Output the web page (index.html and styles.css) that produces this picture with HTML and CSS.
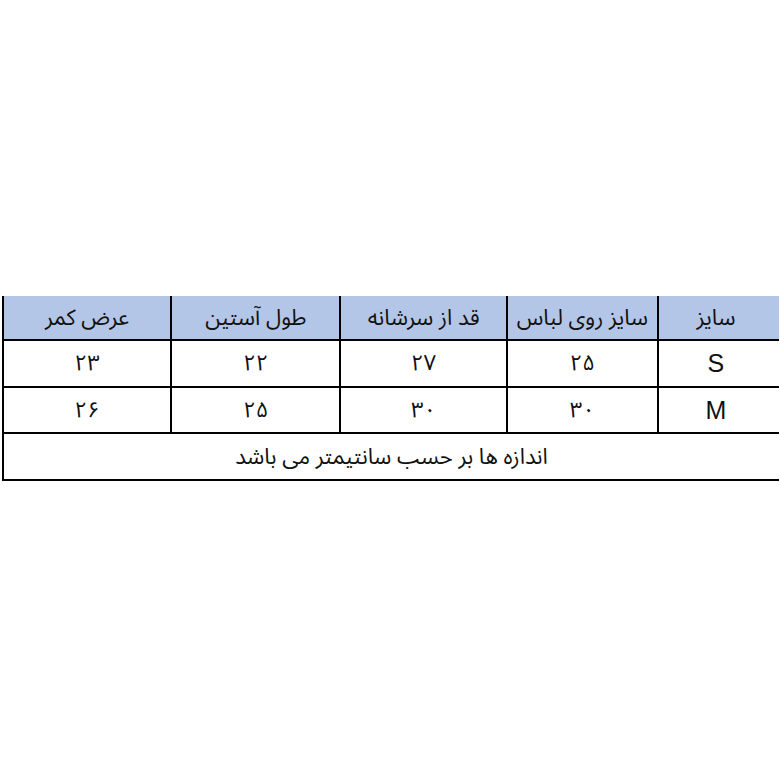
FILE: index.html
```html
<!DOCTYPE html>
<html lang="fa">
<head>
<meta charset="utf-8">
<title>جدول سایز</title>
<link rel="stylesheet" href="styles.css">
</head>
<body>
<div class="page">
  <table class="sizes" dir="rtl">
    <colgroup>
      <col class="c1"><col class="c2"><col class="c3"><col class="c4"><col class="c5">
    </colgroup>
    <thead>
      <tr class="head">
        <th class="first">سایز</th>
        <th>سایز روی لباس</th>
        <th>قد از سرشانه</th>
        <th>طول آستین</th>
        <th>عرض کمر</th>
      </tr>
    </thead>
    <tbody>
      <tr class="row">
        <td class="first latin">S</td>
        <td>۲۵</td>
        <td>۲۷</td>
        <td>۲۲</td>
        <td>۲۳</td>
      </tr>
      <tr class="row">
        <td class="first latin">M</td>
        <td>۳۰</td>
        <td>۳۰</td>
        <td>۲۵</td>
        <td>۲۶</td>
      </tr>
      <tr class="foot">
        <td colspan="5">اندازه ها بر حسب سانتیمتر می باشد</td>
      </tr>
    </tbody>
  </table>
</div>
</body>
</html>
```

FILE: styles.css
```css
html, body {
  margin: 0;
  padding: 0;
  background: #ffffff;
}

.page {
  padding-top: 296px;
  padding-left: 2px;
}

.sizes {
  border-collapse: collapse;
  table-layout: fixed;
  width: 777px;
  font-family: "Noto Sans Arabic", "DejaVu Sans", sans-serif;
  color: #111;
}

.c1 { width: 121px; }
.c2 { width: 151px; }
.c3 { width: 166px; }
.c4 { width: 169px; }
.c5 { width: 168px; }

.sizes th,
.sizes td {
  padding: 0;
  text-align: center;
  vertical-align: middle;
  border: 2px solid #000;
  font-weight: normal;
  white-space: nowrap;
  line-height: 28px;
}

.sizes tr > :first-child {
  border-right: none;
}

.sizes .first {
  padding-right: 6px;
}

.head th {
  border-top: none;
  background: #b4c6e7;
  height: 43px;
  font-size: 22px;
}

.row td {
  height: 44.5px;
  font-size: 22px;
}

.row td.latin {
  font-family: "Liberation Sans", Arial, sans-serif;
  font-size: 25px;
}

.foot td {
  height: 45px;
  font-size: 22px;
}
```
